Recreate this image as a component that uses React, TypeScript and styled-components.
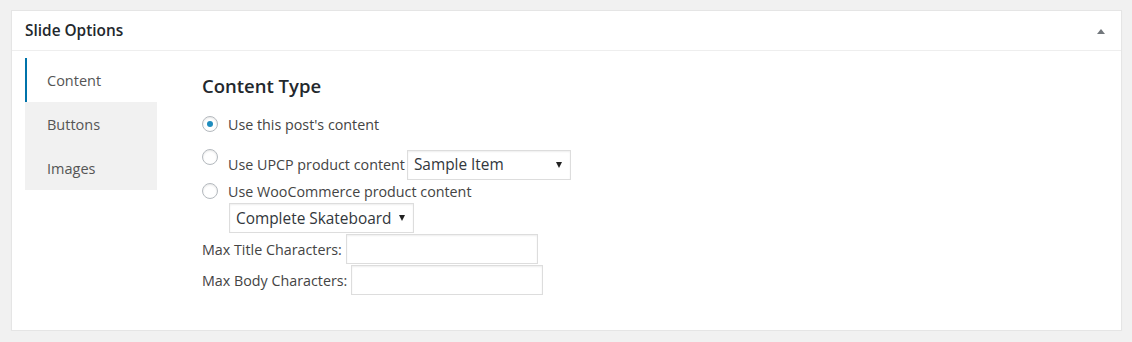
import styled, { createGlobalStyle } from 'styled-components';

const GlobalStyle = createGlobalStyle`
  body {
    margin: 0;
    padding: 10px 10px 0 11px;
    background: #f1f1f1;
    font-family: 'Open Sans', 'Liberation Sans', sans-serif;
    color: #444;
    font-size: 14.3px;
  }
`;

const Panel = styled.div`
  width: 1111px;
  height: 321px;
  box-sizing: border-box;
  background: #fff;
  border: 1px solid #e5e5e5;
  box-shadow: 0 1px 1px rgba(0, 0, 0, 0.04);
  display: flex;
  flex-direction: column;
`;

const Header = styled.div`
  height: 39px;
  border-bottom: 1px solid #eee;
  display: flex;
  align-items: center;
  justify-content: space-between;
  padding: 0 16px 0 13px;
`;

const Title = styled.h2`
  margin: 0;
  font-size: 15.4px;
  font-weight: 600;
  color: #23282d;
  line-height: 1.4;
`;

const Toggle = styled.span`
  width: 0;
  height: 0;
  border-left: 4px solid transparent;
  border-right: 4px solid transparent;
  border-bottom: 5px solid #72777c;
  margin-top: 2px;
`;

const Body = styled.div`
  display: flex;
  padding: 7px 0 0 13px;
`;

const Tabs = styled.ul`
  list-style: none;
  margin: 0;
  padding: 0;
  width: 132px;
  flex: none;
`;

const Tab = styled.li<{ active?: boolean }>`
  height: 44px;
  box-sizing: border-box;
  display: flex;
  align-items: center;
  padding-left: ${({ active }) => (active ? '20px' : '22px')};
  background: ${({ active }) => (active ? '#fff' : '#f1f1f1')};
  border-left: ${({ active }) => (active ? '2px solid #0073aa' : 'none')};
  color: #555;
  font-size: 14.5px;
`;

const Content = styled.div`
  padding: 14px 0 0 45px;
  display: flex;
  flex-direction: column;
  align-items: flex-start;
`;

const Heading = styled.h3`
  margin: 0 0 13px;
  font-size: 18.5px;
  font-weight: 600;
  color: #23282d;
  line-height: 28px;
`;

const Row = styled.label<{ gap?: number }>`
  display: flex;
  align-items: center;
  min-height: 22px;
  margin-bottom: ${({ gap }) => gap ?? 0}px;
  color: #444;
  white-space: nowrap;
`;

const Radio = styled.span<{ checked?: boolean; lift?: number }>`
  width: 16px;
  height: 16px;
  box-sizing: border-box;
  border-radius: 50%;
  border: 1px solid #b4b9be;
  box-shadow: inset 0 1px 2px rgba(0, 0, 0, 0.1);
  background: #fff;
  margin-right: 10px;
  margin-bottom: ${({ lift }) => (lift ?? 0) * 2}px;
  display: flex;
  align-items: center;
  justify-content: center;
  flex: none;

  &::after {
    content: '';
    display: ${({ checked }) => (checked ? 'block' : 'none')};
    width: 6px;
    height: 6px;
    border-radius: 50%;
    background: #1e8cbe;
  }
`;

const Select = styled.div<{ width?: number; indent?: number }>`
  height: 30px;
  box-sizing: border-box;
  width: ${({ width }) => (width ? `${width}px` : 'auto')};
  margin-left: ${({ indent }) => indent ?? 0}px;
  border: 1px solid #ddd;
  box-shadow: inset 0 1px 2px rgba(0, 0, 0, 0.07);
  background: #fff;
  display: flex;
  align-items: center;
  justify-content: space-between;
  padding: 0 8px 0 6px;
  gap: 8px;
  color: #32373c;
  font-size: 15.4px;
`;

const Arrow = styled.span`
  width: 0;
  height: 0;
  border-left: 3px solid transparent;
  border-right: 3px solid transparent;
  border-top: 6px solid #222;
`;

const Field = styled.div`
  display: flex;
  align-items: center;
  margin-top: 1px;
  color: #444;
`;

const TextInput = styled.input`
  width: 192px;
  height: 30px;
  box-sizing: border-box;
  margin: 0 0 0 4px;
  border: 1px solid #ddd;
  box-shadow: inset 0 1px 2px rgba(0, 0, 0, 0.07);
  background: #fff;
  font: inherit;
`;

const App = () => {
  return (
    <>
      <GlobalStyle />
      <Panel>
        <Header>
          <Title>Slide Options</Title>
          <Toggle />
        </Header>
        <Body>
          <Tabs>
            <Tab active>Content</Tab>
            <Tab>Buttons</Tab>
            <Tab>Images</Tab>
          </Tabs>
          <Content>
            <Heading>Content Type</Heading>
            <Row gap={14}>
              <Radio checked />
              Use this post's content
            </Row>
            <Row>
              <Radio lift={7.5} />
              Use UPCP product content
              <Select width={164} style={{ marginLeft: 2 }}>
                Sample Item
                <Arrow />
              </Select>
            </Row>
            <Row>
              <Radio />
              Use WooCommerce product content
            </Row>
            <Select indent={27} style={{ marginTop: 1 }}>
              Complete Skateboard
              <Arrow />
            </Select>
            <Field>
              Max Title Characters:
              <TextInput type="text" />
            </Field>
            <Field>
              Max Body Characters:
              <TextInput type="text" />
            </Field>
          </Content>
        </Body>
      </Panel>
    </>
  );
};

export default App;
